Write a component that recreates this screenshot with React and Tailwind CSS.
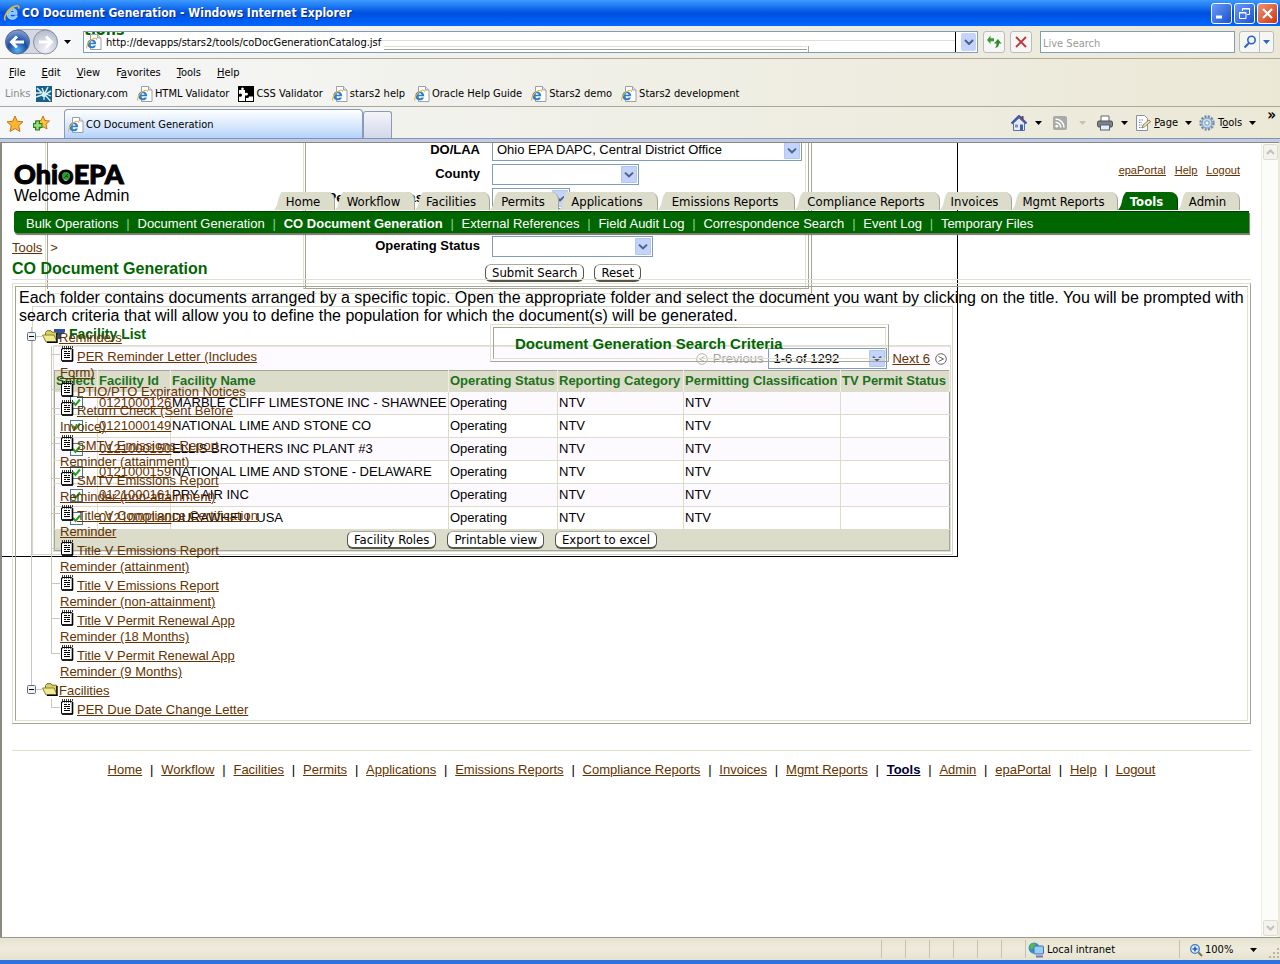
import React from "react";

const DARK_TAB = "#006600";

/* ---------- small drawings ---------- */

function IeLogo({ className = "w-4 h-4" }) {
  return (
    <svg viewBox="0 0 16 16" className={className} aria-hidden="true">
      <path d="M12.500 9.200H6.200c.2 1.600 1.100 2.400 2.400 2.400.9 0 1.500-.4 1.900-1.100h2.300c-.6 2-2.200 3.200-4.300 3.200C5.500 13.700 3.600 11.800 3.600 8.900c0-2.900 1.900-5 4.800-5 2.700 0 4.300 1.900 4.100 5.300zM6.300 7.500h3.900C10 6.300 9.400 5.700 8.300 5.700c-1.100 0-1.800.6-2 1.800z" fill="#7cc4fb" stroke="#d5ecff" strokeWidth=".6" />
      <path d="M2.200 14.500C-.2 12.500 4 4.800 9.800 2.300c3-1.300 4.700-.8 4.300 1.700" fill="none" stroke="#eeb72c" strokeWidth="1.400" />
    </svg>
  );
}

function PageIcon() {
  return (
    <svg viewBox="0 0 16 16" className="h-4 w-4 shrink-0" aria-hidden="true">
      <path d="M4.500 .5h7l3.500 3.500v11.500h-10.500z" fill="#fff" stroke="#9a9fae" />
      <path d="M11.500 .5v3.500H15" fill="#dfe3ee" stroke="#9a9fae" />
      <path d="M10.200 10.300H3.800c.2 1.300.9 2 2 2 .8 0 1.300-.3 1.600-.9h2.500c-.6 1.900-2 2.900-4.100 2.900-2.800 0-4.500-1.700-4.500-4.300S3 5.500 5.800 5.500s4.500 1.900 4.400 4.800zM3.900 8.800h3.700C7.400 7.800 6.800 7.300 5.800 7.300c-1 0-1.700.5-1.900 1.500z" fill="#2c7fd0" />
      <path d="M1 14.500C-.5 12.500 3 6.500 7.500 4.600c2-.8 3.300-.5 3 1.200" fill="none" stroke="#e8b53a" strokeWidth="1.100" />
    </svg>
  );
}

function DictIcon() {
  return (
    <svg viewBox="0 0 16 16" className="h-4 w-4 shrink-0" aria-hidden="true">
      <rect width="16" height="16" fill="#176087" />
      <path d="M0 7h5M1 2l5 5M6 2l2 5M12 1L9 7M15 5l-5 3M0 11l6-2" stroke="#d8eef6" strokeWidth="1.500" />
      <circle cx="8" cy="8.500" r="2.500" fill="#d8eef6" />
      <path d="M9 9l5.500 6M8 10l0 4M10 8l5 2" stroke="#d8eef6" strokeWidth="1.300" />
    </svg>
  );
}

function CssIcon() {
  return (
    <svg viewBox="0 0 16 16" className="h-4 w-4 shrink-0" aria-hidden="true">
      <rect width="16" height="16" fill="#000" />
      <path d="M1 4h2.500q-1-2.500 1-2.500T5.500 4H7v3q3-1 3 1t-3 1.500V15H1z" fill="#fff" />
      <path d="M9 1h2q-.5 2.500 1 2.500T13.500 1H15v7h-2q0 2.500-1.500 2.500T10 8" fill="#000" />
      <path d="M8 15v-3q3 .5 3-1.500h4V15z" fill="#fff" />
      <path d="M1 8q3-1.500 3 1t-3 1.500z" fill="#000" />
    </svg>
  );
}

function Caret({ className = "text-black" }) {
  return (
    <svg viewBox="0 0 7 4" className={"h-1 w-[7px] shrink-0 " + className} aria-hidden="true">
      <path d="M0 0h7L3.500 4z" fill="currentColor" />
    </svg>
  );
}

function DropArrow() {
  return (
    <svg viewBox="0 0 16 18" className="pointer-events-none absolute right-[2px] top-[2px] h-[calc(100%-4px)] w-4" preserveAspectRatio="none" aria-hidden="true">
      <rect width="16" height="18" rx="1" fill="#c3d3fb" />
      <rect x=".5" y=".5" width="15" height="17" rx="1" fill="none" stroke="#b2c5f2" />
      <path d="M4 7l4 4 4-4" fill="none" stroke="#4d6185" strokeWidth="2" />
    </svg>
  );
}

function NoteIcon() {
  return (
    <svg viewBox="0 0 14 16" className="h-4 w-[14px] shrink-0" aria-hidden="true">
      <path d="M2 2.500h9.500q1 0 1 1v10.500q0 1-1 1H2.500q-1 0-1-1v-11z" fill="#fff" stroke="#000" />
      <path d="M12.500 3v12M2 15h11" stroke="#000" strokeWidth="1.600" />
      <path d="M2 1h11" stroke="#000" strokeWidth="1.400" strokeDasharray="1 1" />
      <path d="M2 3h10" stroke="#000" strokeDasharray="1 1" />
      <path d="M4 5.500h3M8 5.500h2M4 7.500h6M4 9.500h2M7 9.500h3M4 11.500h6" stroke="#000" />
    </svg>
  );
}

function FolderIcon() {
  return (
    <svg viewBox="0 0 16 13" className="h-[13px] w-4 shrink-0" aria-hidden="true">
      <path d="M3.500 11V2.500L5 .7h4l1 1.500h4.500V11z" fill="#d8d06a" stroke="#77702a" />
      <path d="M.5 5h11.500l3 7H4z" fill="#f0ea8e" stroke="#8a8332" />
      <path d="M15 3v9.300H5" fill="none" stroke="#000" strokeWidth="1.400" />
    </svg>
  );
}

function MinusBox() {
  return (
    <svg viewBox="0 0 9 9" className="h-[9px] w-[9px] shrink-0" aria-hidden="true">
      <rect x=".5" y=".5" width="8" height="8" rx="1" fill="#f2f2ea" stroke="#56708a" />
      <path d="M2 4.500h5" stroke="#000" />
    </svg>
  );
}

function Circled({ dir, className }) {
  return (
    <svg viewBox="0 0 12 12" className={"h-3 w-3 shrink-0 " + className} aria-hidden="true">
      <circle cx="6" cy="6" r="5.300" fill="#fff" stroke="currentColor" />
      <path d={dir === "next" ? "M3.500 3.500L8.500 6l-5 2.500" : "M8.500 3.500L3.500 6l5 2.500"} fill="none" stroke="currentColor" />
    </svg>
  );
}

/* ---------- browser chrome ---------- */

function TitleBar() {
  const btn = "flex h-[21px] w-[21px] items-center justify-center rounded-[3px] border border-white";
  return (
    <div className="flex h-[26px] items-center justify-between bg-linear-to-b from-[#3c9aff] via-[#0050e0] to-[#0066ff] pl-[3px] pr-[2px]">
      <div className="flex items-center gap-[1px]">
        <IeLogo className="h-[18px] w-[18px]" />
        <span className="font-['DejaVu_Sans_Condensed','DejaVu_Sans',sans-serif] text-[12px] font-bold text-white [text-shadow:1px_1px_#0a2a80]">
          CO Document Generation - Windows Internet Explorer
        </span>
      </div>
      <div className="flex gap-[2px]">
        <button aria-label="Minimize" className={btn + " bg-linear-to-br from-[#6b9bf7] to-[#1a4fd0]"}>
          <svg viewBox="0 0 13 13" className="h-[13px] w-[13px]"><path d="M1 10h6" stroke="#fff" strokeWidth="3" /></svg>
        </button>
        <button aria-label="Restore" className={btn + " bg-linear-to-br from-[#6b9bf7] to-[#1a4fd0]"}>
          <svg viewBox="0 0 13 13" className="h-[13px] w-[13px]" fill="none" stroke="#fff"><path d="M4.500 4V1.500h7v6H9M4 2h8M1.500 5.500h6.500v6h-6.500zM1 6h7" /></svg>
        </button>
        <button aria-label="Close" className={btn + " bg-linear-to-br from-[#f0906c] to-[#cc3210]"}>
          <svg viewBox="0 0 13 13" className="h-[13px] w-[13px]"><path d="M2 2l9 9M11 2l-9 9" stroke="#fff" strokeWidth="2.200" /></svg>
        </button>
      </div>
    </div>
  );
}

function AddressRow() {
  return (
    <div className="flex h-[33px] items-center border-b border-[#b5aa98] pl-[5px] pr-[6px]">
      <svg viewBox="0 0 54 28" className="h-7 w-[54px] shrink-0" aria-hidden="true">
        <defs>
          <radialGradient id="back" cx=".5" cy=".85" r=".8"><stop offset="0" stopColor="#55b5f5" /><stop offset=".5" stopColor="#1c4da5" /><stop offset="1" stopColor="#7b9ad0" /></radialGradient>
          <radialGradient id="fwd" cx=".5" cy=".8" r=".8"><stop offset="0" stopColor="#f0f2f6" /><stop offset="1" stopColor="#b4bccb" /></radialGradient>
        </defs>
        <path d="M12 1.500h28a12 12 0 0 1 0 24H12z" fill="#d4d8e0" stroke="#a9afba" />
        <circle cx="12.500" cy="14" r="12" fill="url(#back)" stroke="#5d6a88" />
        <circle cx="40.500" cy="14" r="12" fill="url(#fwd)" stroke="#8a92a3" />
        <path d="M19 14H7M12 8.500L6.500 14l5.500 5.500" fill="none" stroke="#fff" strokeWidth="3" />
        <path d="M34 14h12M41 8.500l5.500 5.500-5.500 5.500" fill="none" stroke="#fff" strokeWidth="3" />
      </svg>
      <span className="ml-[5px]"><Caret /></span>
      <div className="relative ml-3 mr-[5px] flex h-[22px] min-w-0 flex-1 items-center overflow-hidden border border-[#7f9db9] bg-white">
        <span className="absolute -top-[10px] left-0 text-[16px] font-bold leading-4 text-[#006600]">tions</span>
        <span className="absolute left-[44px] right-[22px] top-[8px] h-px bg-[#deded2]" />
        <span className="absolute left-[300px] right-[170px] top-[14px] h-1 border-b border-t border-[#a5a596] border-t-[#deded2]" />
        <span className="absolute right-[168px] top-[14px] h-[6px] w-px bg-[#a5a596]" />
        <span className="absolute right-[21px] top-0 h-full w-px bg-black" />
        <span className="relative flex pl-[2px]"><PageIcon /></span>
        <input aria-label="Address" defaultValue="http://devapps/stars2/tools/coDocGenerationCatalog.jsf" className="relative ml-1 w-full bg-transparent pt-[2px] outline-none" />
        <button aria-label="Show addresses" className="absolute right-[1px] top-[1px] flex h-[18px] w-[15px] items-center justify-center rounded-[2px] bg-[#c3d3fb]">
          <svg viewBox="0 0 10 6" className="h-[6px] w-[10px]"><path d="M1 1l4 4 4-4" fill="none" stroke="#4d6185" strokeWidth="2" /></svg>
        </button>
      </div>
      <button aria-label="Refresh" className="mr-[5px] flex h-[22px] w-[22px] items-center justify-center rounded-[3px] border border-[#b8bcc8] bg-[#f6f6f2]">
        <svg viewBox="0 0 16 16" className="h-4 w-4"><path d="M1 6l3.500-4.500v2.700H8v3H4.500v2.800z" fill="#3a9a3a" /><path d="M12 5l3.500 4.500H13q0 4-4 4.500 1.800-1.800 1.500-4.500H8z" fill="#2d8a2f" /></svg>
      </button>
      <button aria-label="Stop" className="mr-2 flex h-[22px] w-[22px] items-center justify-center rounded-[3px] border border-[#b8bcc8] bg-[#f6f6f2]">
        <svg viewBox="0 0 12 12" className="h-3 w-3"><path d="M1 1l10 10M11 1L1 11" stroke="#c0353c" strokeWidth="1.800" /></svg>
      </button>
      <input aria-label="Live Search" placeholder="Live Search" className="h-[22px] w-[195px] border border-[#7f9db9] bg-white px-[2px] pt-[2px] outline-none placeholder:text-[#9a9a94]" />
      <div className="ml-1 flex h-[22px] w-[35px] overflow-hidden rounded-[3px] border border-[#b8bcc8] bg-[#f6f6f2]">
        <button aria-label="Search" className="flex w-5 items-center justify-center border-r border-[#b8bcc8]">
          <svg viewBox="0 0 14 14" className="h-[14px] w-[14px]"><circle cx="8.500" cy="5" r="3.700" fill="#eef5ff" stroke="#2f62c8" strokeWidth="1.600" /><path d="M6 8l-4.500 4.500" stroke="#2f62c8" strokeWidth="2.200" /></svg>
        </button>
        <button aria-label="Search options" className="flex flex-1 items-center justify-center"><Caret className="text-[#2f62c8]" /></button>
      </div>
    </div>
  );
}

const MENU = [["", "F", "ile"], ["", "E", "dit"], ["", "V", "iew"], ["F", "a", "vorites"], ["", "T", "ools"], ["", "H", "elp"]];
const LINKS = ["Dictionary.com", "HTML Validator", "CSS Validator", "stars2 help", "Oracle Help Guide", "Stars2 demo", "Stars2 development"];

function ToolItem({ children, label, caret = "text-black" }) {
  return (
    <button aria-label={label} className="flex items-center gap-2">
      {children}
      <Caret className={caret} />
    </button>
  );
}

function Chrome() {
  return (
    <div className="bg-linear-to-r from-[#f6f7f9] via-[#f0efe6] to-[#ebe8d6] text-[11px] leading-[14px]">
      <AddressRow />
      <div className="flex h-[25px] items-center gap-4 pl-[9px] pt-[2px]">
        {MENU.map(([a, b, c]) => (
          <button key={a + b + c}>{a}<u>{b}</u>{c}</button>
        ))}
      </div>
      <div className="flex h-[23px] items-center gap-[9px] border-b border-[#a9a89c] pb-[2px] pl-[5px]">
        <span className="-mr-[3px] text-[#8b8b86]">Links</span>
        {LINKS.map((l, i) => (
          <a href="#" key={l} className="flex items-center gap-[2px] whitespace-nowrap">
            {i === 0 ? <DictIcon /> : i === 2 ? <CssIcon /> : <PageIcon />}
            {l}
          </a>
        ))}
      </div>
      <div className="flex h-[31px] items-end justify-between">
        <div className="flex items-end">
          <div className="flex w-16 items-center gap-2 self-center pl-[6px]">
            <svg viewBox="0 0 18 18" className="h-[18px] w-[18px]" aria-hidden="true"><path d="M9 1l2.300 5.300 5.700.5-4.300 3.900 1.300 5.800L9 13.500l-5 3 1.300-5.800L1 6.800l5.700-.5z" fill="#fbb62a" stroke="#c8741c" /></svg>
            <svg viewBox="0 0 18 18" className="h-[18px] w-[18px]" aria-hidden="true"><path d="M11 1l1.900 4.500 4.600.5-3.600 3.200 1.100 4.800-4-2.300-4 2.300 1-4.800L4 6l5.100-.5z" fill="#fbc43a" stroke="#c8741c" /><path d="M5.500 5.500v10M1 10.500h9.500" stroke="#23811f" strokeWidth="5" /><path d="M5.500 6.500v8M2 10.500h7.500" stroke="#9be07c" strokeWidth="2.400" /></svg>
          </div>
          <div className="flex h-[29px] w-[299px] items-center gap-[2px] rounded-t-[4px] border border-b-0 border-[#8c9ab8] bg-linear-to-b from-white via-[#dcebfd] to-[#b4d2fa] pl-[3px] pt-[2px]">
            <PageIcon />
            <span>CO Document Generation</span>
          </div>
          <button aria-label="New tab" className="h-[27px] w-[29px] rounded-t-[3px] border border-b-0 border-[#8c9ab8] bg-linear-to-b from-[#f4f5fa] to-[#d3d8ea]" />
        </div>
        <div className="mr-1 flex items-center gap-[11px] self-center">
          <ToolItem label="Home">
            <svg viewBox="0 0 16 16" className="h-4 w-4"><path d="M2.500 8v7.500h11V8L8 3z" fill="#e8ecf8" stroke="#5b6ea8" /><path d="M.5 8.500L8 1l7.500 7.500" fill="none" stroke="#3653a8" strokeWidth="2" /><path d="M11.500 1v3" stroke="#7a3a2a" strokeWidth="2" /><rect x="9" y="9.500" width="3" height="6" fill="#3a5fb8" /><rect x="4" y="9.500" width="3" height="3" fill="#7b90d0" /></svg>
          </ToolItem>
          <ToolItem label="Feeds" caret="ml-1 text-[#c4c2b8]">
            <svg viewBox="0 0 14 14" className="h-[14px] w-[14px]"><rect width="14" height="14" rx="2" fill="#a9a9a6" /><circle cx="3.800" cy="10.200" r="1.400" fill="#fff" /><path d="M2.500 6.200a5.300 5.300 0 0 1 5.300 5.300M2.500 3a8.500 8.500 0 0 1 8.500 8.500" fill="none" stroke="#fff" strokeWidth="1.500" /></svg>
          </ToolItem>
          <ToolItem label="Print">
            <svg viewBox="0 0 16 16" className="h-4 w-4"><path d="M4 7V1h8v6" fill="#fff" stroke="#666" /><rect x=".5" y="6" width="15" height="6" rx="1.500" fill="#7d8088" stroke="#4a4c52" /><rect x="3.500" y="10" width="9" height="5" fill="#dff0ff" stroke="#5a6070" /></svg>
          </ToolItem>
          <button className="-ml-1 flex items-center gap-[3px]">
            <svg viewBox="0 0 16 16" className="h-4 w-4"><path d="M1.500 .5h8l3 3v12h-11z" fill="#fdfdff" stroke="#8790a8" /><path d="M4 5h5M4 7.500h3M4 10h3M4 12.500h5" stroke="#5f86c8" strokeDasharray="1.500 1" /><path d="M7 13l1-3 6-5 1.500 1.800-6 5z" fill="#f2dfa2" stroke="#82703c" strokeWidth=".8" /></svg>
            <span><u>P</u>age</span>
            <span className="ml-1"><Caret /></span>
          </button>
          <button className="-ml-1 flex items-center gap-[3px]">
            <svg viewBox="0 0 16 16" className="h-4 w-4"><circle cx="8" cy="8" r="6.500" fill="none" stroke="#6f8fb0" strokeWidth="2.400" strokeDasharray="2.200 1.200" /><circle cx="8" cy="8" r="5" fill="#c8dcf0" stroke="#7797b8" /><circle cx="8" cy="8" r="2.200" fill="#f4f4ec" stroke="#7797b8" /></svg>
            <span>T<u>o</u>ols</span>
            <span className="ml-1"><Caret /></span>
          </button>
          <span className="-mt-4 text-[15px] font-bold">»</span>
        </div>
      </div>
      <div className="h-1 border-t border-[#8094b4] bg-[#c3cbe3]" />
    </div>
  );
}

function StatusBar() {
  return (
    <div className="border-b-4 border-[#2f74de] bg-[#ece9d8] text-[11px]">
      <div className="flex h-[23px] items-stretch justify-end border-t border-[#9a9888] bg-linear-to-b from-[#e6e2cf] via-[#efecdd] to-[#e6e2cf]">
        {[0, 1, 2, 3, 4, 5].map((i) => (
          <span key={i} className="my-[2px] w-6 border-l border-[#c5c2b0]" />
        ))}
        <span className="my-[2px] flex w-[154px] items-center gap-[3px] border-l border-[#c5c2b0] pl-[2px] pt-[2px]">
          <svg viewBox="0 0 16 16" className="h-4 w-4" aria-hidden="true"><circle cx="6" cy="6" r="5.500" fill="#2f8fd8" /><path d="M2 3q4-4 5 0t-3 4-2-4z" fill="#57b84a" /><rect x="6" y="4" width="9.500" height="8" rx="1" fill="#8fd0f5" stroke="#5468a8" /><path d="M8 14.500h7" stroke="#7a6fc0" strokeWidth="2" /></svg>
          Local intranet
        </span>
        <button className="my-[2px] flex w-[101px] items-center border-l border-[#c5c2b0] pl-[10px] pt-[2px]">
          <svg viewBox="0 0 13 13" className="mr-[2px] h-[13px] w-[13px]" aria-hidden="true"><circle cx="5" cy="5" r="4.300" fill="#e4f0ff" stroke="#3a78c8" strokeWidth="1.300" /><path d="M5 2.500v5M2.500 5h5" stroke="#2458b0" strokeWidth="1.500" /><path d="M8.500 8.500l3.500 3.500" stroke="#8a6a50" strokeWidth="2" /></svg>
          100%
          <span className="ml-auto mr-[23px]"><Caret /></span>
        </button>
        <svg viewBox="0 0 12 12" className="-ml-3 mb-[1px] h-3 w-3 self-end" aria-hidden="true"><path d="M9 1h2v2h-2zM5 5h2v2h-2zM9 5h2v2h-2zM1 9h2v2h-2zM5 9h2v2h-2zM9 9h2v2h-2z" fill="#b8b5a2" /></svg>
      </div>
    </div>
  );
}

/* ---------- search results layer ---------- */

function Picker({ id, label, width, value = "" }) {
  return (
    <div className="flex h-6 items-center">
      <label htmlFor={id} className="w-[174px] text-right font-bold">{label}</label>
      <span className={"relative ml-3 " + width}>
        <select id={id} className="block h-[21px] w-full appearance-none border border-[#7f9db9] bg-white px-1">
          <option>{value}</option>
        </select>
        <DropArrow />
      </span>
    </div>
  );
}

function PillButton({ children }) {
  return (
    <button className="h-[18px] whitespace-nowrap rounded-[6px] border border-b-2 border-[#55554c] border-t-[#a8a89c] bg-white px-[6px] font-['DejaVu_Sans_Condensed','DejaVu_Sans',sans-serif] text-[13px] leading-[15px]">
      {children}
    </button>
  );
}

function RowCheck({ label }) {
  return (
    <span className="relative mx-auto block h-[13px] w-[13px]">
      <input type="checkbox" defaultChecked aria-label={label} className="peer block h-[13px] w-[13px] appearance-none border border-[#4b7a8c] bg-white" />
      <svg viewBox="0 0 13 13" className="pointer-events-none absolute left-0 top-0 hidden h-[13px] w-[13px] peer-checked:block" aria-hidden="true">
        <path d="M3 6l2.500 3L10 3.500" fill="none" stroke="#21a121" strokeWidth="2" />
      </svg>
    </span>
  );
}

const HEADS = ["Select", "Facility Id", "Facility Name", "Operating Status", "Reporting Category", "Permitting Classification", "TV Permit Status"];
const FACILITIES = [
  ["0121000126", "MARBLE CLIFF LIMESTONE INC - SHAWNEE"],
  ["0121000149", "NATIONAL LIME AND STONE CO"],
  ["0121000150", "ELLIS BROTHERS INC PLANT #3"],
  ["0121000159", "NATIONAL LIME AND STONE - DELAWARE"],
  ["0121000161", "PRY AIR INC"],
  ["0121000180", "DURAWHELL USA"],
];

function ResultsLayer() {
  return (
    <div className="absolute left-0 top-0 flex w-[956px] flex-col border-b border-r border-black pb-[1px] text-[13px] leading-4">
      <div className="ml-[43px] w-[767px] border-b border-l border-r border-[#e0e0ce] border-r-[#a5a596] pb-1">
        <div className="ml-[1px] border-l border-[#a5a596]">
          <div className="ml-[255px] w-[506px] border-b border-l border-r border-[#a5a596] border-l-[#e0e0ce]">
            <div className="ml-[1px] mr-[2px] border-l border-r border-[#a5a596] border-r-[#e0e0ce] pb-[6px]">
              <div className="-mt-[5px] flex flex-col">
                <Picker id="doLaa" label="DO/LAA" width="w-[310px]" value="Ohio EPA DAPC, Central District Office" />
                <Picker id="county" label="County" width="w-[147px]" />
                <Picker id="classification" label="Permitting Classification" width="w-[78px]" />
                <div className="h-6" />
                <Picker id="opStatus" label="Operating Status" width="w-[161px]" />
              </div>
              <div className="ml-[179px] mt-[6px] flex gap-[10px]">
                <PillButton>Submit Search</PillButton>
                <PillButton>Reset</PillButton>
              </div>
            </div>
          </div>
        </div>
      </div>

      <div className="ml-[30px] mr-1 mt-3 border border-[#d6d6c6] pb-[2px]">
        <h2 className="ml-[21px] mt-[19px] flex items-center gap-1 text-[14px] font-bold text-[#006600]">
          <svg viewBox="0 0 11 10" className="h-[10px] w-[11px]" aria-hidden="true"><path d="M0 0h11v3L7 6v4H4V6L0 3z" fill="#2e4fa0" /></svg>
          Facility List
        </h2>
        <div className="ml-[20px] mr-[1px] mt-[3px] border border-[#deded0] bg-[#fdfbff]">
          <div className="flex h-6 items-center justify-end gap-[5px] border-t border-[#e4e4d8] pr-[3px]">
            <Circled dir="prev" className="text-[#b4b4a8]" />
            <span className="text-[#a8a8a0]">Previous</span>
            <span className="relative w-[119px]">
              <select aria-label="Rows shown" className="block h-[21px] w-full appearance-none border border-[#7f9db9] bg-white px-1">
                <option>1-6 of 1292</option>
              </select>
              <DropArrow />
            </span>
            <a href="#" className="text-[#663300] underline">Next 6</a>
            <Circled dir="next" className="text-[#66665c]" />
          </div>
          <table className="w-full table-fixed border-collapse border border-[#a5a596]">
            <colgroup>
              <col className="w-[43px]" />
              <col className="w-[73px]" />
              <col className="w-[278px]" />
              <col className="w-[109px]" />
              <col className="w-[126px]" />
              <col className="w-[157px]" />
              <col />
            </colgroup>
            <thead>
              <tr className="h-[21px] bg-[#dcdccb] text-left text-[#1c721c]">
                {HEADS.map((h) => (
                  <th key={h} className="whitespace-nowrap border-r border-[#eeeee2] p-0 pl-[1px] font-bold">{h}</th>
                ))}
              </tr>
            </thead>
            <tbody>
              {FACILITIES.map(([id, name]) => (
                <tr key={id} className="h-[23px] border-b border-[#dcdccb] odd:bg-[#fcfaff] even:bg-white">
                  <td className="border-r border-[#dcdccb] p-0"><RowCheck label={"Select " + name} /></td>
                  <td className="border-r border-[#dcdccb] p-0 pl-[1px]"><a href="#" className="text-[#663300] underline">{id}</a></td>
                  <td className="whitespace-nowrap border-r border-[#dcdccb] p-0 pl-[1px]">{name}</td>
                  <td className="border-r border-[#dcdccb] p-0 pl-[1px]">Operating</td>
                  <td className="border-r border-[#dcdccb] p-0 pl-[1px]">NTV</td>
                  <td className="border-r border-[#dcdccb] p-0 pl-[1px]">NTV</td>
                  <td />
                </tr>
              ))}
            </tbody>
            <tfoot>
              <tr className="h-[21px] bg-[#dcdccb]">
                <td colSpan={7} className="p-0">
                  <div className="flex justify-center gap-[11px]">
                    <PillButton>Facility Roles</PillButton>
                    <PillButton>Printable view</PillButton>
                    <PillButton>Export to excel</PillButton>
                  </div>
                </td>
              </tr>
            </tfoot>
          </table>
        </div>
      </div>

      <div className="pointer-events-none absolute left-[488px] top-[181px] w-[399px] border border-b-[#a5a596] border-l-[#e0e0ce] border-r-[#a5a596] border-t-[#e0e0ce] p-[2px]">
        <div className="border border-b-[#e0e0ce] border-l-[#a5a596] border-r-[#e0e0ce] border-t-[#a5a596] pb-[6px] pl-[21px] pt-2 text-[15px] font-bold leading-4 text-[#006600]">
          Document Generation Search Criteria
        </div>
      </div>
    </div>
  );
}

/* ---------- application page ---------- */

const TABS = [
  ["Home", "w-[61px]"],
  ["Workflow", "w-[80px]"],
  ["Facilities", "w-[75px]"],
  ["Permits", "w-[69px]"],
  ["Applications", "w-[99px]"],
  ["Emissions Reports", "w-[137px]"],
  ["Compliance Reports", "w-[145px]"],
  ["Invoices", "w-[72px]"],
  ["Mgmt Reports", "w-[106px]"],
  ["Tools", "w-[60px]"],
  ["Admin", "w-[62px]"],
];

function Tab({ label, width }) {
  const active = label === "Tools";
  return (
    <button className={"flex h-[18px] items-stretch " + width}>
      <svg viewBox="0 0 8 18" className="h-[18px] w-2 shrink-0" aria-hidden="true">
        <path d="M0 18Q3 15 4 9T8 0v18z" fill={active ? DARK_TAB : "#dcdccb"} />
      </svg>
      <span className={"flex flex-1 items-center justify-center whitespace-nowrap rounded-tr-[8px] border-r pr-[10px] pt-[1px] " + (active ? "border-[#003c00] bg-[#006600] font-bold text-white" : "border-[#a5a596] bg-[#dcdccb]")}>
        {label}
      </span>
    </button>
  );
}

const SUBNAV = ["Bulk Operations", "Document Generation", "CO Document Generation", "External References", "Field Audit Log", "Correspondence Search", "Event Log", "Temporary Files"];
const FOOTER = ["Home", "Workflow", "Facilities", "Permits", "Applications", "Emissions Reports", "Compliance Reports", "Invoices", "Mgmt Reports", "Tools", "Admin", "epaPortal", "Help", "Logout"];
const TREE = [
  {
    name: "Reminders",
    docs: [
      ["PER Reminder Letter (Includes", "Form)"],
      ["PTIO/PTO Expiration Notices"],
      ["Return Check (Sent Before", "Invoice)"],
      ["SMTV Emissions Report", "Reminder (attainment)"],
      ["SMTV Emissions Report", "Reminder (non-attainment)"],
      ["Title V Compliance Certification", "Reminder"],
      ["Title V Emissions Report", "Reminder (attainment)"],
      ["Title V Emissions Report", "Reminder (non-attainment)"],
      ["Title V Permit Renewal App", "Reminder (18 Months)"],
      ["Title V Permit Renewal App", "Reminder (9 Months)"],
    ],
  },
  { name: "Facilities", docs: [["PER Due Date Change Letter"]] },
];

function Tree() {
  return (
    <ul className="ml-[11px] text-[13px] leading-4 text-[#663300]">
      {TREE.map((folder, f) => (
        <li key={folder.name} className="flex items-stretch">
          <div className="flex w-[9px] shrink-0 flex-col items-center">
            <span className="h-[5px] w-px bg-[#c8c8bc]" />
            <MinusBox />
            {f === 0 && <span className="w-px flex-1 bg-[#c8c8bc]" />}
          </div>
          <div>
            <div className="flex h-[19px] items-start">
              <span className="mt-[9px] h-px w-[6px] bg-[#c8c8bc]" />
              <span className="mr-[1px] mt-[3px] flex"><FolderIcon /></span>
              <a href="#" className="mt-[3px] underline">{folder.name}</a>
            </div>
            <ul>
              {folder.docs.map((lines, i) => (
                <li key={i} className="flex items-stretch">
                  <div className="ml-[15px] flex w-[9px] shrink-0 flex-col">
                    <span className="h-[9px] border-b border-l border-[#c8c8bc]" />
                    {i < folder.docs.length - 1 && <span className="flex-1 border-l border-[#c8c8bc]" />}
                  </div>
                  <a href="#" className="block">
                    <span className="flex h-[19px] items-start gap-[3px]">
                      <NoteIcon />
                      <span className="mt-[3px] whitespace-nowrap underline">{lines[0]}</span>
                    </span>
                    {lines[1] && <span className="block whitespace-nowrap underline">{lines[1]}</span>}
                  </a>
                </li>
              ))}
            </ul>
          </div>
        </li>
      ))}
    </ul>
  );
}

function AppPage() {
  return (
    <div className="relative px-[10px] text-[13px] leading-4">
      <header className="flex h-[68px] items-end justify-between pb-[1px] pl-[2px]">
        <div>
          <div className="flex font-[Lato,sans-serif] text-[27px] font-black leading-[25px] [-webkit-text-stroke:1px_#000]">
            Ohi
            <span className="relative">
              o
              <svg viewBox="0 0 8 8" className="absolute left-[4px] top-[11px] h-2 w-2" aria-hidden="true"><circle cx="4" cy="4" r="4" fill="#2f9a35" /><path d="M2 6l4-4M4 4l2 1" stroke="#0d4d12" /></svg>
            </span>
            EPA
          </div>
          <p className="mb-1 text-[16px] leading-5">Welcome Admin</p>
        </div>
        <div className="flex flex-col items-end pr-[11px]">
          <div className="mb-[14px] flex gap-[9px] text-[11px] leading-4 text-[#663300] underline">
            <a href="#">epaPortal</a>
            <a href="#">Help</a>
            <a href="#">Logout</a>
          </div>
          <nav className="flex font-['DejaVu_Sans_Condensed','DejaVu_Sans',sans-serif]">
            {TABS.map(([label, width]) => (
              <Tab key={label} label={label} width={width} />
            ))}
          </nav>
        </div>
      </header>
      <nav className="ml-[2px] mr-[2px] flex h-[22px] items-center rounded-l-[3px] border-t border-[#003c00] bg-[#006600] pl-3 pt-[2px] text-white shadow-[1px_2px_1px_#77776c]">
        {SUBNAV.map((s, i) => (
          <React.Fragment key={s}>
            {i > 0 && <span className="w-[19px] text-center text-[#8fd08f]">|</span>}
            <a href="#" className={i === 2 ? "whitespace-nowrap font-bold" : "whitespace-nowrap"}>{s}</a>
          </React.Fragment>
        ))}
      </nav>
      <p className="mt-[7px] text-[#663300]"><a href="#" className="mr-2 underline">Tools</a>&gt;</p>
      <h1 className="mt-[3px] border-b border-[#e0e0ce] text-[16px] font-bold leading-5 text-[#006600]">CO Document Generation</h1>
      <main className="mt-[3px] border border-b-[#a5a596] border-l-[#e0e0ce] border-r-[#a5a596] border-t-[#e0e0ce] p-[2px]">
        <div className="border border-b-[#e0e0ce] border-l-[#a5a596] border-r-[#e0e0ce] border-t-[#a5a596] pb-[2px]">
          <p className="px-[3px] pt-[2px] text-[16px] leading-[18px]">
            Each folder contains documents arranged by a specific topic. Open the appropriate folder and select the document you want by clicking on the title. You will be prompted with search criteria that will allow you to define the population for which the document(s) will be generated.
          </p>
          <div className="mt-[2px]"><Tree /></div>
        </div>
      </main>
      <footer className="mt-[26px] flex justify-center border-t border-[#e0e0ce] pt-[11px]">
        {FOOTER.map((s, i) => (
          <React.Fragment key={s}>
            {i > 0 && <span className="w-[19px] text-center">|</span>}
            <a href="#" className={s === "Tools" ? "font-bold text-[#000033] underline" : "whitespace-nowrap text-[#663300] underline"}>{s}</a>
          </React.Fragment>
        ))}
      </footer>
    </div>
  );
}

function ScrollBar() {
  const btn = "flex h-4 w-[15px] items-center justify-center rounded-[2px] border border-[#deddd2] bg-[#f4f3ee]";
  return (
    <div className="flex w-[17px] shrink-0 flex-col items-center justify-between border-l border-[#eeede5] bg-[#fcfcf9] py-[1px]">
      <button aria-label="Scroll up" className={btn}>
        <svg viewBox="0 0 9 6" className="h-[6px] w-[9px]"><path d="M1 5l3.500-3.500L8 5" fill="none" stroke="#c2c1b5" strokeWidth="2" /></svg>
      </button>
      <button aria-label="Scroll down" className={btn}>
        <svg viewBox="0 0 9 6" className="h-[6px] w-[9px]"><path d="M1 1l3.500 3.500L8 1" fill="none" stroke="#c2c1b5" strokeWidth="2" /></svg>
      </button>
    </div>
  );
}

export default function App() {
  return (
    <div className="flex min-h-screen flex-col font-['DejaVu_Sans_Condensed','DejaVu_Sans',sans-serif] text-black">
      <TitleBar />
      <Chrome />
      <div className="flex flex-1 border-l-2 border-r-2 border-t border-[#8a8a80] border-r-[#ece9d8] bg-white font-['Liberation_Sans',Arial,sans-serif]">
        <div className="relative min-w-0 flex-1 overflow-hidden">
          <ResultsLayer />
          <AppPage />
        </div>
        <ScrollBar />
      </div>
      <StatusBar />
    </div>
  );
}
